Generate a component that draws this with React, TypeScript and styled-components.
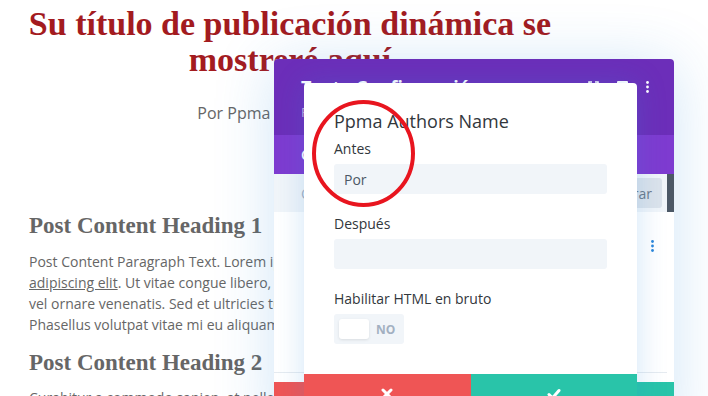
import React from 'react';
import styled, { createGlobalStyle } from 'styled-components';

const GlobalStyle = createGlobalStyle`
  html, body {
    margin: 0;
    padding: 0;
    overflow: hidden;
    background: #fff;
  }

  body {
    font-family: "Open Sans", "Liberation Sans", sans-serif;
  }
`;

const Page = styled.div`
  position: relative;
  width: 708px;
  height: 396px;
  overflow: hidden;
  background: #fff;
`;

const Article = styled.article`
  width: 580px;
`;

const PostTitle = styled.h1`
  margin: 0;
  padding-top: 6px;
  font-family: "Liberation Serif", serif;
  font-weight: 700;
  font-size: 34px;
  line-height: 36px;
  color: #a31b1f;
  text-align: center;
`;

const PostMeta = styled.p`
  margin: 25px 0 0;
  font-size: 16px;
  font-weight: 500;
  line-height: 20px;
  color: #666;
  text-align: center;
`;

const PostBody = styled.div`
  margin-top: 89px;
  padding: 0 29px;
`;

const ContentHeading = styled.h2<{ $gap: number }>`
  margin: ${(p) => p.$gap}px 0 0;
  font-family: "Liberation Serif", serif;
  font-weight: 700;
  font-size: 23px;
  line-height: 28px;
  color: #666;
`;

const Paragraph = styled.p<{ $gap: number }>`
  margin: ${(p) => p.$gap}px 0 0;
  font-size: 14px;
  line-height: 21px;
  color: #666;
  white-space: nowrap;

  a {
    color: inherit;
    text-decoration: underline;
  }
`;

/* settings modal behind the popup */

const SettingsModal = styled.div`
  position: absolute;
  left: 274px;
  top: 59px;
  width: 400px;
  height: 380px;
  display: flex;
  flex-direction: column;
  background: #fff;
  border-radius: 4px;
  overflow: hidden;
  box-shadow: 0 5px 60px rgba(43, 135, 218, 0.22);
`;

const ModalHeader = styled.div`
  height: 76px;
  box-sizing: border-box;
  padding: 16px 25px 0 27px;
  display: flex;
  justify-content: space-between;
  background: #6c2eb9;
`;

const ModalTitle = styled.div`
  font-size: 18px;
  font-weight: 700;
  line-height: 24px;
  color: #fff;
`;

const ModalSubtitle = styled.div`
  margin-top: 4px;
  font-size: 13px;
  line-height: 18px;
  color: rgba(255, 255, 255, 0.6);
`;

const HeaderActions = styled.div`
  display: flex;
  align-items: flex-start;
  gap: 18px;
  margin-top: 6px;
`;

const Tabs = styled.div`
  height: 39px;
  display: flex;
  align-items: center;
  gap: 30px;
  padding-left: 27px;
  background: #7e3bd0;
`;

const Tab = styled.span<{ $active?: boolean }>`
  font-size: 14px;
  font-weight: 600;
  line-height: 18px;
  color: ${(p) => (p.$active ? '#fff' : 'rgba(255, 255, 255, 0.6)')};
`;

const Toolbar = styled.div`
  height: 38px;
  display: flex;
  align-items: center;
  padding-left: 27px;
  background: #f1f5f9;
`;

const SearchText = styled.span`
  flex: 1;
  font-size: 14px;
  color: #a2b0c1;
`;

const FilterButton = styled.span`
  height: 30px;
  display: flex;
  align-items: center;
  padding: 0 10px;
  border-radius: 3px;
  background: #dce3eb;
  font-size: 14px;
  color: #6c7a89;
`;

const ScrollEdge = styled.span`
  align-self: stretch;
  width: 7px;
  margin-left: 5px;
  background: #4c5866;
`;

const ModalBody = styled.div`
  height: 160px;
  margin-right: 7px;
  border-bottom: 1px solid #e6ebf0;
`;

const OptionGroup = styled.div`
  height: 68px;
  display: flex;
  align-items: center;
  justify-content: flex-end;
  padding: 0 13px 0 27px;
`;

const ModalFooter = styled.div`
  margin-top: 9px;
  height: 40px;
  display: flex;
`;

const FooterButton = styled.div<{ $tone: 'cancel' | 'save' }>`
  flex: 1;
  display: flex;
  align-items: center;
  justify-content: center;
  background: ${(p) => (p.$tone === 'cancel' ? '#ef5555' : '#29c4a9')};
`;

/* popup with the author name options */

const Popup = styled.div`
  position: absolute;
  left: 304px;
  top: 83px;
  width: 333px;
  background: #fff;
  border-radius: 4px;
  overflow: hidden;
  box-shadow: 0 0 30px rgba(43, 135, 218, 0.22);
`;

const PopupBody = styled.div`
  padding: 26px 30px 30px;
  display: flex;
  flex-direction: column;
`;

const PopupTitle = styled.div`
  font-size: 18px;
  line-height: 24px;
  color: #32373c;
`;

const Field = styled.div<{ $gap: number }>`
  margin-top: ${(p) => p.$gap}px;
  display: flex;
  flex-direction: column;
  gap: 6px;
`;

const Label = styled.div`
  font-size: 14px;
  line-height: 18px;
  color: #32373c;
`;

const TextInput = styled.div`
  height: 30px;
  box-sizing: border-box;
  display: flex;
  align-items: center;
  padding: 0 10px;
  border-radius: 3px;
  background: #f1f5f9;
  font-size: 14px;
  color: #4c5866;
`;

const Toggle = styled.div`
  width: 70px;
  height: 30px;
  box-sizing: border-box;
  display: flex;
  align-items: center;
  gap: 7px;
  padding-left: 5px;
  border-radius: 3px;
  background: #f1f5f9;
`;

const Knob = styled.span`
  width: 30px;
  height: 20px;
  border-radius: 3px;
  background: #fff;
  box-shadow: 0 1px 3px rgba(0, 0, 0, 0.1);
`;

const ToggleText = styled.span`
  font-size: 12px;
  font-weight: 700;
  color: #a2b0c1;
`;

const PopupFooter = styled.div`
  height: 40px;
  display: flex;
`;

const Annotation = styled.svg`
  position: absolute;
  left: 308px;
  top: 96px;
  overflow: visible;
  pointer-events: none;
`;

const Kebab = ({ color }: { color: string }) => (
  <svg width="3" height="12" viewBox="0 0 3 12">
    <circle cx="1.5" cy="1.5" r="1.4" fill={color} />
    <circle cx="1.5" cy="6" r="1.4" fill={color} />
    <circle cx="1.5" cy="10.5" r="1.4" fill={color} />
  </svg>
);

const ExpandIcon = () => (
  <svg width="11" height="11" viewBox="0 0 11 11" fill="none" stroke="#fff" strokeWidth="1.6">
    <path d="M1 4V1h3M7 1h3v3M10 7v3H7M4 10H1V7" />
  </svg>
);

const PanelIcon = () => (
  <svg width="11" height="11" viewBox="0 0 11 11">
    <rect x="0" y="0" width="11" height="11" rx="1" fill="#fff" />
  </svg>
);

const CloseIcon = () => (
  <svg width="12" height="12" viewBox="0 0 12 12" stroke="#fff" strokeWidth="3" strokeLinecap="round">
    <path d="M2 2l8 8M10 2l-8 8" />
  </svg>
);

const CheckIcon = () => (
  <svg width="14" height="12" viewBox="0 0 14 12" fill="none" stroke="#fff" strokeWidth="3" strokeLinecap="round" strokeLinejoin="round">
    <path d="M2 6.5l3.5 3.5L12 2.5" />
  </svg>
);

export default function App() {
  return (
    <Page>
      <GlobalStyle />
      <Article>
        <PostTitle>Su título de publicación dinámica se mostreré aquí</PostTitle>
        <PostMeta>Por Ppma Authors Name</PostMeta>
        <PostBody>
          <ContentHeading $gap={0}>Post Content Heading 1</ContentHeading>
          <Paragraph $gap={11}>
            Post Content Paragraph Text. Lorem ipsum dolor sit amet, consectetur
            <br />
            <a href="#">adipiscing elit</a>. Ut vitae congue libero, nec finibus purus.
            <br />
            vel ornare venenatis. Sed et ultricies turpis. Donec sit amet.
            <br />
            Phasellus volutpat vitae mi eu aliquam.
          </Paragraph>
          <ContentHeading $gap={14}>Post Content Heading 2</ContentHeading>
          <Paragraph $gap={10}>Curabitur a commodo sapien, at pellentesque nunc.</Paragraph>
        </PostBody>
      </Article>

      <SettingsModal>
        <ModalHeader>
          <div>
            <ModalTitle>Texto Configuración</ModalTitle>
            <ModalSubtitle>Preset: Default</ModalSubtitle>
          </div>
          <HeaderActions>
            <ExpandIcon />
            <PanelIcon />
            <Kebab color="#fff" />
          </HeaderActions>
        </ModalHeader>
        <Tabs>
          <Tab $active>Contenido</Tab>
          <Tab>Diseño</Tab>
          <Tab>Avanzado</Tab>
        </Tabs>
        <Toolbar>
          <SearchText>Opciones de búsqueda</SearchText>
          <FilterButton>+ Filtrar</FilterButton>
          <ScrollEdge />
        </Toolbar>
        <ModalBody>
          <OptionGroup>
            <Kebab color="#2b87da" />
          </OptionGroup>
        </ModalBody>
        <ModalFooter>
          <FooterButton $tone="cancel" />
          <FooterButton $tone="save" />
        </ModalFooter>
      </SettingsModal>

      <Popup>
        <PopupBody>
          <PopupTitle>Ppma Authors Name</PopupTitle>
          <Field $gap={7}>
            <Label>Antes</Label>
            <TextInput>Por</TextInput>
          </Field>
          <Field $gap={21}>
            <Label>Después</Label>
            <TextInput />
          </Field>
          <Field $gap={21}>
            <Label>Habilitar HTML en bruto</Label>
            <Toggle>
              <Knob />
              <ToggleText>NO</ToggleText>
            </Toggle>
          </Field>
        </PopupBody>
        <PopupFooter>
          <FooterButton $tone="cancel">
            <CloseIcon />
          </FooterButton>
          <FooterButton $tone="save">
            <CheckIcon />
          </FooterButton>
        </PopupFooter>
      </Popup>

      <Annotation width="112" height="114" viewBox="0 0 112 114">
        <ellipse cx="55.5" cy="57.5" rx="49.5" ry="51.5" fill="none" stroke="#e8151f" strokeWidth="4" />
      </Annotation>
    </Page>
  );
}
